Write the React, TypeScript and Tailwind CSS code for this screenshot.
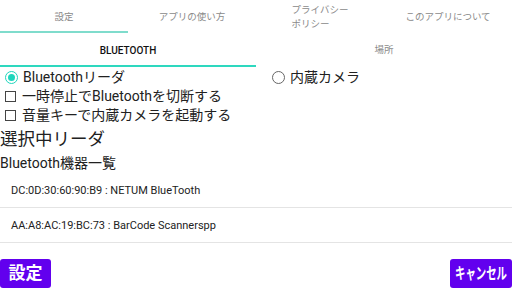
import React from 'react';

const font = { fontFamily: 'Roboto, "Noto Sans CJK JP", sans-serif' };

const topTabs = ['設定', 'アプリの使い方', 'プライバシー\nポリシー', 'このアプリについて'];

export default function App() {
  return (
    <div
      className="w-[512px] h-[288px] bg-white overflow-hidden flex flex-col text-[#212121]"
      style={font}
    >
      {/* main tabs */}
      <div className="grid grid-cols-4 h-[34px]">
        {topTabs.map((t, i) => (
          <div key={t} className="relative flex items-center justify-center">
            <span className="whitespace-pre text-left text-[9.5px] leading-[14px] text-[#8a8a8a]">
              {t}
            </span>
            {i === 0 && (
              <div className="absolute left-0 right-0 bottom-[1px] h-[2px] bg-[#7fdccc]" />
            )}
          </div>
        ))}
      </div>

      {/* sub tabs */}
      <div className="grid grid-cols-2 h-[33px]">
        <div className="relative flex items-center justify-center">
          <span className="text-[10px] font-medium text-[#111]">BLUETOOTH</span>
          <div className="absolute left-0 right-0 bottom-0 h-[2px] bg-[#2ed8bf]" />
        </div>
        <div className="flex items-center justify-center">
          <span className="text-[9.5px] text-[#8a8a8a]">場所</span>
        </div>
      </div>

      {/* radios */}
      <div className="grid grid-cols-2 h-[20px] text-[14px] leading-[20px]">
        <div className="flex items-center pl-[5px] gap-[5px]">
          <span className="w-[13px] h-[13px] rounded-full border-[1.5px] border-[#1fd6bd] flex items-center justify-center">
            <span className="w-[7px] h-[7px] rounded-full bg-[#1fd6bd]" />
          </span>
          <span>Bluetoothリーダ</span>
        </div>
        <div className="flex items-center pl-[16px] gap-[5px]">
          <span className="w-[13px] h-[13px] rounded-full border-[1.5px] border-[#666]" />
          <span>内蔵カメラ</span>
        </div>
      </div>

      {/* checkboxes */}
      {['一時停止でBluetoothを切断する', '音量キーで内蔵カメラを起動する'].map((t) => (
        <div key={t} className="flex items-center h-[19px] pl-[5px] gap-[6px] text-[14px]">
          <span className="w-[11px] h-[11px] border border-[#444]" />
          <span>{t}</span>
        </div>
      ))}

      <div className="h-[28px] flex items-end text-[17.5px] leading-[24px] pb-[2px]">
        選択中リーダ
      </div>
      <div className="h-[20px] flex items-center text-[14px]">
        Bluetooth機器一覧
      </div>

      {/* device list */}
      <div className="flex flex-col">
        {[
          'DC:0D:30:60:90:B9 : NETUM BlueTooth',
          'AA:A8:AC:19:BC:73 : BarCode Scannerspp',
        ].map((d) => (
          <div
            key={d}
            className="h-[35px] flex items-center pl-[11px] pt-[2px] border-b border-[#e4e4e4] text-[11px] text-[#222]"
          >
            {d}
          </div>
        ))}
      </div>

      {/* buttons */}
      <div className="flex-1 flex justify-between items-end">
        <button className="w-[51px] h-[29px] bg-[#6200ee] text-white text-[17px] font-bold rounded-[3px] flex items-center justify-center">
          設定
        </button>
        <button className="w-[62px] h-[29px] bg-[#6200ee] text-white rounded-[3px] flex items-center justify-center whitespace-nowrap overflow-hidden">
          <span className="inline-block text-[16px] font-bold scale-x-[0.65]">キャンセル</span>
        </button>
      </div>
    </div>
  );
}
